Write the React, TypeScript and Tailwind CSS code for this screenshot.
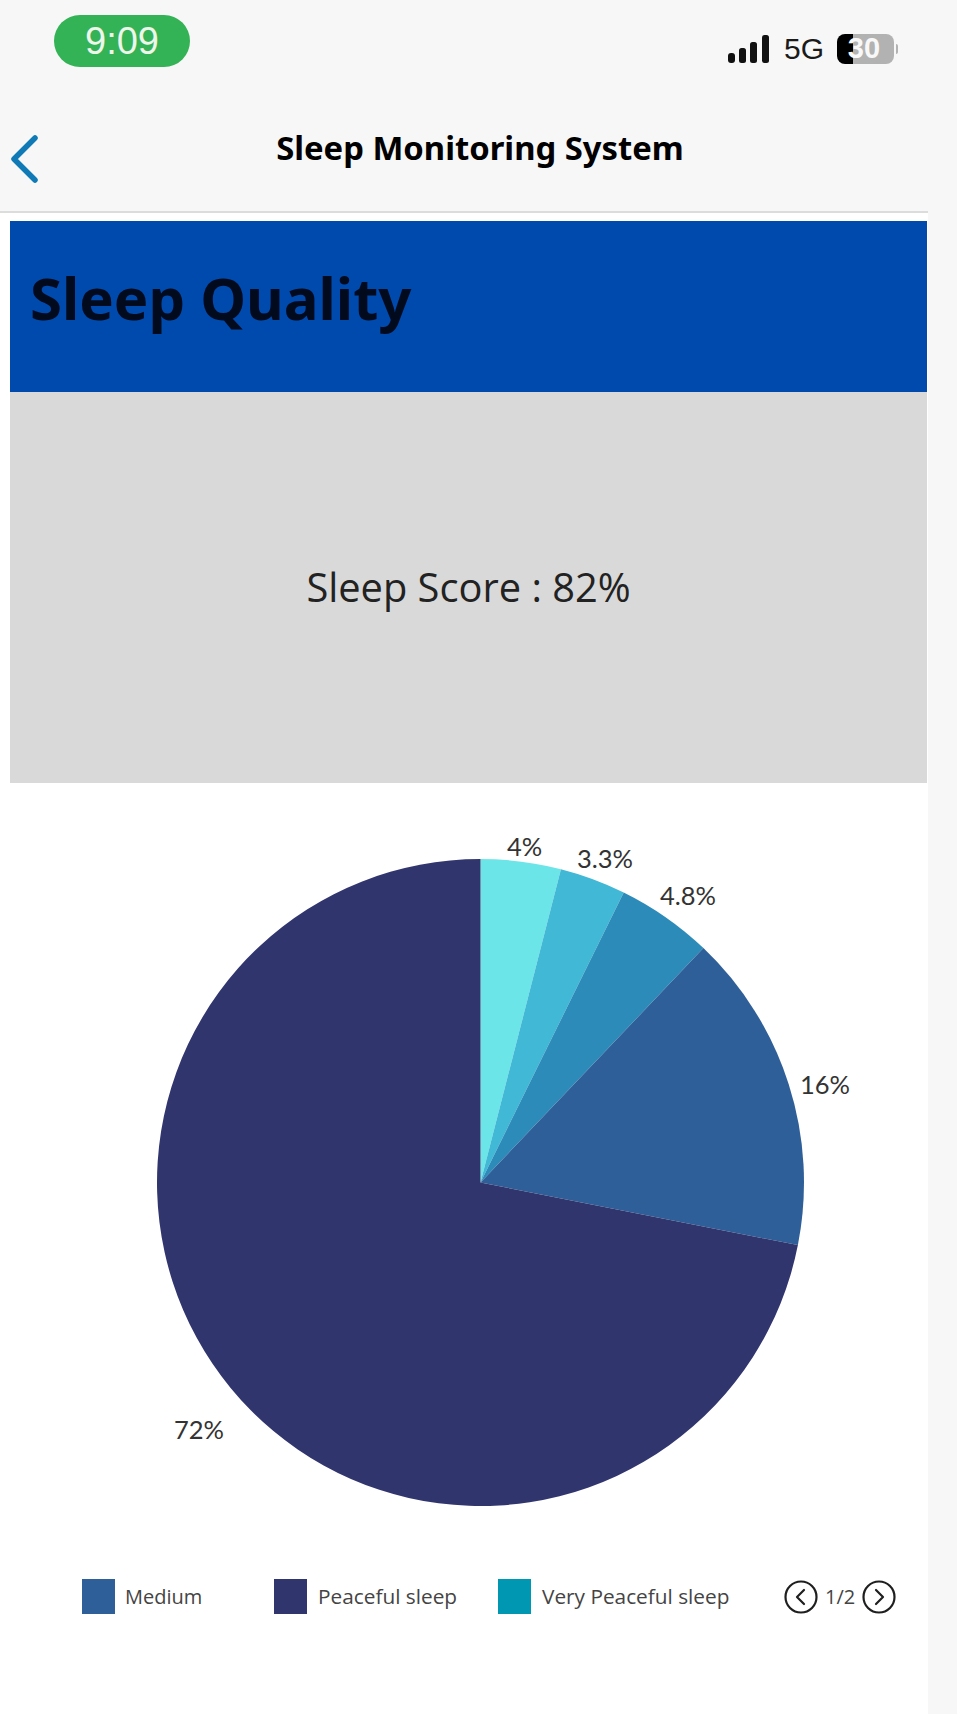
import React from "react";

const CX = 480.5;
const CY = 1183.5;
const R = 323.5;

const slices = [
  { pct: 4, color: "#6ce5e8" },
  { pct: 3.3, color: "#41b8d5" },
  { pct: 4.8, color: "#2d8bba" },
  { pct: 16, color: "#2f5f98" },
  { pct: 71.9, color: "#31356e" },
];

const pieLabels = [
  { text: "4%", x: 507, y: 857 },
  { text: "3.3%", x: 577, y: 869 },
  { text: "4.8%", x: 660, y: 906 },
  { text: "16%", x: 800, y: 1095 },
  { text: "72%", x: 174, y: 1440 },
];

const legend = [
  { label: "Medium", color: "bg-[#2f5f98]", width: "w-[192px]", text: "ml-[10px] text-[20px]" },
  { label: "Peaceful sleep", color: "bg-[#31356e]", width: "w-[224px]", text: "ml-[11px] text-[20.8px]" },
  { label: "Very Peaceful sleep", color: "bg-[#0097b2]", width: "w-[286px]", text: "ml-[11px] text-[20.8px]" },
];

function slicePath(start: number, end: number) {
  const a0 = (start / 100) * 2 * Math.PI;
  const a1 = (end / 100) * 2 * Math.PI;
  const x0 = CX + R * Math.sin(a0);
  const y0 = CY - R * Math.cos(a0);
  const x1 = CX + R * Math.sin(a1);
  const y1 = CY - R * Math.cos(a1);
  const large = end - start > 50 ? 1 : 0;
  return `M${CX} ${CY} L${x0} ${y0} A${R} ${R} 0 ${large} 1 ${x1} ${y1} Z`;
}

function PieChart() {
  let acc = 0;
  return (
    <svg viewBox="0 784 928 796" className="block h-[796px] w-[928px]">
      {slices.map((s) => {
        const d = slicePath(acc, acc + s.pct);
        acc += s.pct;
        return <path key={s.color} d={d} fill={s.color} />;
      })}
      {pieLabels.map((l) => (
        <text
          key={l.text}
          x={l.x}
          y={l.y}
          fill="#333333"
          fontSize="25.5"
          fontFamily="Lato, sans-serif"
        >
          {l.text}
        </text>
      ))}
    </svg>
  );
}

function StatusBar() {
  return (
    <div className="flex h-[100px] items-start justify-between pl-[54px] pr-[30px] pt-[15px]">
      <div className="flex h-[52px] w-[136px] items-center justify-center rounded-[26px] bg-[#34b256] font-['Liberation_Sans',sans-serif] text-[38px] text-[#eef5ea]">
        9:09
      </div>
      <div className="mt-[19px] flex h-[30px] items-center">
        <svg width="42" height="28" viewBox="0 0 42 28" fill="#111111">
          <rect x="0" y="18" width="7" height="10" rx="3" />
          <rect x="11" y="13" width="7" height="15" rx="2.5" />
          <rect x="22" y="7" width="7" height="21" rx="2.5" />
          <rect x="34" y="0" width="7" height="28" rx="2.5" />
        </svg>
        <span className="ml-[14px] font-['Liberation_Sans',sans-serif] text-[30px] leading-none text-[#1a1a1a]">
          5G
        </span>
        <div className="ml-[13px] flex h-[30px] w-[57px] items-center justify-center rounded-[8px] bg-[linear-gradient(90deg,#000000_28%,#b2b2b2_28%)] pr-[3px] font-['Liberation_Sans',sans-serif] text-[29px] font-bold text-[#f8f8f8]">
          30
        </div>
        <div className="ml-[2px] h-[10px] w-[2px] rounded-r bg-[#b2b2b2]" />
      </div>
    </div>
  );
}

function NavBar() {
  return (
    <div className="relative flex h-[113px] items-start justify-center border-b-2 border-[#dcdcdc] pl-[32px] pt-[26px]">
      <svg
        width="30"
        height="50"
        viewBox="0 0 30 50"
        fill="none"
        className="absolute left-[10px] top-[34px]"
      >
        <path
          d="M25 4 L4 25 L25 46"
          stroke="#0f7ab5"
          strokeWidth="5.5"
          strokeLinecap="round"
          strokeLinejoin="round"
        />
      </svg>
      <h1 className="font-['Noto_Sans',sans-serif] text-[32.8px] font-bold leading-[44px] text-black">
        Sleep Monitoring System
      </h1>
    </div>
  );
}

function Circle({ dir }: { dir: "left" | "right" }) {
  return (
    <svg width="34" height="34" viewBox="0 0 34 34" fill="none" stroke="#1f1f1f" strokeWidth="2.2">
      <circle cx="17" cy="17" r="15.5" />
      <path
        d={dir === "left" ? "M20 10 L13 17 L20 24" : "M14 10 L21 17 L14 24"}
        strokeLinecap="round"
        strokeLinejoin="round"
      />
    </svg>
  );
}

function Legend() {
  return (
    <div className="flex items-center pl-[82px]">
      {legend.map((item) => (
        <div key={item.label} className={`flex items-center ${item.width}`}>
          <div className={`h-[35px] w-[33px] ${item.color}`} />
          <span className={`font-['Open_Sans',sans-serif] text-[#444444] ${item.text}`}>
            {item.label}
          </span>
        </div>
      ))}
      <div className="flex items-center">
        <Circle dir="left" />
        <span className="mx-[7px] font-['Open_Sans',sans-serif] text-[20px] text-[#444444]">1/2</span>
        <Circle dir="right" />
      </div>
    </div>
  );
}

export default function App() {
  return (
    <div className="flex h-[1714px] w-[957px] overflow-hidden bg-[#f7f7f7]">
      <div className="w-[928px] bg-white">
        <div className="bg-[#f7f7f7]">
          <StatusBar />
          <NavBar />
        </div>
        <div className="ml-[10px] mr-[1px] mt-[8px]">
          <div className="flex h-[171px] items-center bg-[#004aad] pb-[19px] pl-[20px]">
            <h2 className="font-['Noto_Sans',sans-serif] text-[58px] font-bold text-[#020a1e]">
              Sleep Quality
            </h2>
          </div>
          <div className="flex h-[391px] items-center justify-center bg-[#d9d9d9] pb-[1px]">
            <span className="font-['Open_Sans',sans-serif] text-[39.8px] text-[#222222]">
              Sleep Score : 82%
            </span>
          </div>
        </div>
        <PieChart />
        <Legend />
      </div>
    </div>
  );
}
